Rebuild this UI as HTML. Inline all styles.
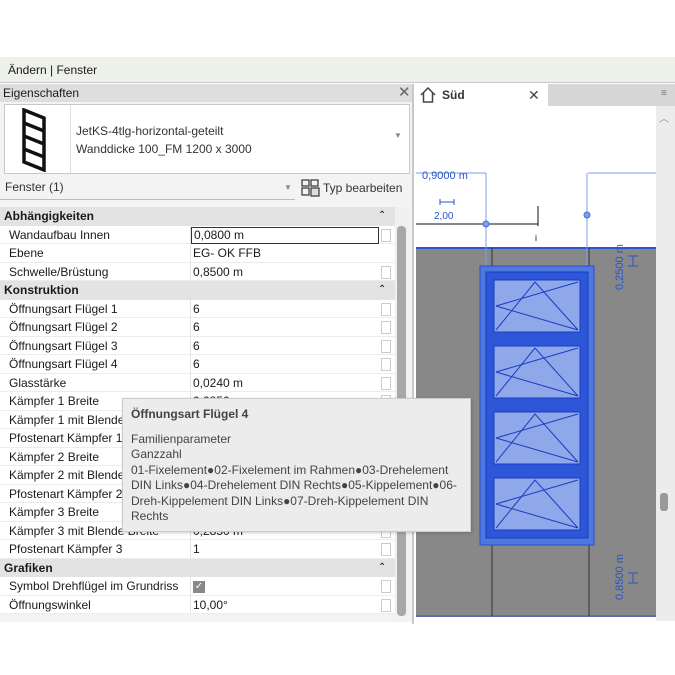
<!DOCTYPE html>
<html><head><meta charset="utf-8"><style>
*{margin:0;padding:0;box-sizing:border-box}
body{width:675px;height:675px;background:#fff;font-family:"Liberation Sans",sans-serif;font-size:12px;color:#1a1a1a;position:relative;overflow:hidden}
.abs{position:absolute}
.row{height:18.5px;line-height:18.5px;position:relative;border-bottom:1px solid #ececec;background:#fff}
.row .l{position:absolute;left:9px}
.row .v{position:absolute;left:193px}
.row .cb{position:absolute;left:381px;top:3px;width:10px;height:13px;border:1px solid #ccc;background:#fff}
.row:after{content:"";position:absolute;left:190px;top:0;bottom:0;border-left:1px solid #e4e4e4}
.sec{height:18.5px;line-height:18.5px;background:#e3e3e3;font-weight:bold;padding-left:4px;position:relative}
.sec .ch{position:absolute;left:378px;font-size:10px;font-weight:normal}
</style></head><body>
<div class="abs" style="left:0;top:57px;width:675px;height:26px;background:#eef0ea;border-bottom:1px solid #c8c8c8;line-height:26px;padding-left:8px">Ändern | Fenster</div>
<div class="abs" style="left:0;top:84px;width:412px;height:18px;background:#dedede;line-height:18px;padding-left:3px">Eigenschaften<span style="position:absolute;left:398px;top:0;font-size:15px;color:#666">✕</span></div>
<div class="abs" style="left:0;top:102px;width:412px;height:520px;background:#f3f3f3"></div>
<div class="abs" style="left:4px;top:104px;width:406px;height:70px;background:#fff;border:1px solid #c8c8c8"></div>
<div class="abs" style="left:5px;top:105px;width:66px;height:68px;border-right:1px solid #ddd"></div>
<svg class="abs" style="left:20px;top:108px" width="30" height="64"><g fill="none" stroke="#111" stroke-width="3.5"><polygon points="4,2 24,10 24,62 4,54"/><line x1="4" y1="15" x2="24" y2="23"/><line x1="4" y1="28" x2="24" y2="36"/><line x1="4" y1="41" x2="24" y2="49"/></g></svg>
<div class="abs" style="left:76px;top:122px;line-height:18px;color:#333">JetKS-4tlg-horizontal-geteilt<br>Wanddicke 100_FM 1200 x 3000</div>
<div class="abs" style="left:394px;top:131px;font-size:8px;color:#888">▼</div>
<div class="abs" style="left:5px;top:180px;color:#333">Fenster (1)</div>
<div class="abs" style="left:0;top:199px;width:295px;border-top:1px solid #bbb"></div>
<div class="abs" style="left:284px;top:183px;font-size:8px;color:#888">▼</div>
<svg class="abs" style="left:301px;top:179px" width="20" height="18"><g fill="none" stroke="#333" stroke-width="1.2"><rect x="1" y="1" width="7" height="6"/><rect x="10" y="1" width="7" height="6"/><rect x="1" y="9" width="7" height="7"/><rect x="10" y="9" width="8" height="8" fill="#ddd"/></g></svg>
<div class="abs" style="left:323px;top:181px;color:#333">Typ bearbeiten</div>
<div class="abs" style="left:0;top:207px;width:395px">
<div class="sec">Abhängigkeiten<span class="ch">⌃</span></div>
<div class="row"><span class="l">Wandaufbau Innen</span><span class="v" style="left:191px;top:1px;width:188px;height:17px;border:1px solid #333;line-height:15px;padding-left:2px">0,0800 m</span><span class="cb"></span></div>
<div class="row"><span class="l">Ebene</span><span class="v">EG- OK FFB</span></div>
<div class="row"><span class="l">Schwelle/Brüstung</span><span class="v">0,8500 m</span><span class="cb"></span></div>
<div class="sec">Konstruktion<span class="ch">⌃</span></div>
<div class="row"><span class="l">Öffnungsart Flügel 1</span><span class="v">6</span><span class="cb"></span></div>
<div class="row"><span class="l">Öffnungsart Flügel 2</span><span class="v">6</span><span class="cb"></span></div>
<div class="row"><span class="l">Öffnungsart Flügel 3</span><span class="v">6</span><span class="cb"></span></div>
<div class="row"><span class="l">Öffnungsart Flügel 4</span><span class="v">6</span><span class="cb"></span></div>
<div class="row"><span class="l">Glasstärke</span><span class="v">0,0240 m</span><span class="cb"></span></div>
<div class="row"><span class="l">Kämpfer 1 Breite</span><span class="v">0,0850 m</span><span class="cb"></span></div>
<div class="row"><span class="l">Kämpfer 1 mit Blende Breite</span><span class="v">0,2850 m</span><span class="cb"></span></div>
<div class="row"><span class="l">Pfostenart Kämpfer 1</span><span class="v">1</span><span class="cb"></span></div>
<div class="row"><span class="l">Kämpfer 2 Breite</span><span class="v">0,0850 m</span><span class="cb"></span></div>
<div class="row"><span class="l">Kämpfer 2 mit Blende Breite</span><span class="v">0,2850 m</span><span class="cb"></span></div>
<div class="row"><span class="l">Pfostenart Kämpfer 2</span><span class="v">1</span><span class="cb"></span></div>
<div class="row"><span class="l">Kämpfer 3 Breite</span><span class="v">0,0850 m</span><span class="cb"></span></div>
<div class="row"><span class="l">Kämpfer 3 mit Blende Breite</span><span class="v">0,2850 m</span><span class="cb"></span></div>
<div class="row"><span class="l">Pfostenart Kämpfer 3</span><span class="v">1</span><span class="cb"></span></div>
<div class="sec">Grafiken<span class="ch">⌃</span></div>
<div class="row"><span class="l">Symbol Drehflügel im Grundriss</span><span class="v" style="top:4px;width:12px;height:12px;background:#888;color:#fff;font-size:10px;line-height:12px;text-align:center">✓</span><span class="cb"></span></div>
<div class="row"><span class="l">Öffnungswinkel</span><span class="v">10,00°</span><span class="cb"></span></div>
</div>
<div class="abs" style="left:395px;top:207px;width:14px;height:410px;background:#f0f0f0"></div>
<div class="abs" style="left:397px;top:226px;width:9px;height:390px;background:#a8a8a8;border-radius:4px"></div>
<div class="abs" style="left:412px;top:84px;width:2px;height:540px;background:#c8c8c8"></div>
<div class="abs" style="left:414px;top:84px;width:261px;height:22px;background:#d6d6d6"></div>
<div class="abs" style="left:414px;top:84px;width:134px;height:22px;background:#fff;line-height:22px;padding-left:28px;font-weight:bold;color:#333">Süd<span style="position:absolute;left:114px;font-weight:normal;font-size:14px;color:#444">✕</span></div>
<svg class="abs" style="left:420px;top:87px" width="16" height="16"><path d="M1 8 L8 1 L15 8 M3.5 6 V15 H12.5 V6" fill="none" stroke="#444" stroke-width="1.5"/></svg>
<div class="abs" style="left:661px;top:88px;font-size:10px;color:#777">≡</div>
<div class="abs" style="left:656px;top:106px;width:19px;height:515px;background:#ececec"></div>
<div class="abs" style="left:660px;top:493px;width:8px;height:18px;background:#999;border-radius:3px"></div>
<div class="abs" style="left:659px;top:110px;font-size:10px;color:#888">︿</div>
<svg class="abs" style="left:414px;top:106px" width="242" height="515">
<rect x="2" y="142" width="240" height="369" fill="#888"/>
<line x1="2" y1="142" x2="242" y2="142" stroke="#2a55d0" stroke-width="2"/>
<line x1="2" y1="510" x2="242" y2="510" stroke="#2a55d0" stroke-width="1"/>
<line x1="78" y1="142" x2="78" y2="510" stroke="#333"/><line x1="175" y1="142" x2="175" y2="510" stroke="#333"/>
<line x1="2" y1="67" x2="72" y2="67" stroke="#7a9ff0"/><line x1="174" y1="67" x2="242" y2="67" stroke="#7a9ff0"/>
<line x1="72" y1="67" x2="72" y2="165" stroke="#7a9ff0"/><line x1="173" y1="67" x2="173" y2="165" stroke="#7a9ff0"/>
<text x="8" y="77" font-family="Liberation Sans" font-size="11" fill="#2a55c8" dy="-4">0,9000 m</text>
<line x1="2" y1="118" x2="124" y2="118" stroke="#111"/><line x1="124" y1="100" x2="124" y2="120" stroke="#111"/>
<text x="121" y="135" font-size="9" fill="#111" font-family="Liberation Sans">i</text>
<circle cx="72" cy="118" r="3" fill="#7a9ff0" stroke="#4a6fd0"/><circle cx="173" cy="109" r="3" fill="#7a9ff0" stroke="#4a6fd0"/>
<path d="M26 96 H40 M26 93 V99 M40 93 V99" stroke="#2a55c8" fill="none"/>
<text x="20" y="113" font-size="10" fill="#2a55c8" font-family="Liberation Sans">2,00</text>
<text transform="translate(209,184) rotate(-90)" font-size="11" fill="#2a55c8" font-family="Liberation Sans">0,2500 m</text>
<path d="M214 150 H224 M219 150 V160 M214 160 H224" stroke="#2a55c8" fill="none"/>
<text transform="translate(209,494) rotate(-90)" font-size="11" fill="#2a55c8" font-family="Liberation Sans">0,8500 m</text>
<path d="M214 467 H224 M219 467 V477 M214 477 H224" stroke="#2a55c8" fill="none"/>
<rect x="66" y="160" width="114" height="279" fill="#4f78de" stroke="#2850d0"/>
<rect x="72" y="166" width="102" height="266" fill="#2d56d8" stroke="#1a3cc0"/>
<g fill="#8ea8ea" stroke="#1a3cc0">
<rect x="80" y="174" width="86" height="52"/><rect x="80" y="240" width="86" height="52"/><rect x="80" y="306" width="86" height="52"/><rect x="80" y="372" width="86" height="52"/></g>
<g fill="none" stroke="#1a3cc0" stroke-width="1">
<path d="M82 224 L121 176 L164 224 M82 200 L164 224 M82 200 L164 176"/>
<path d="M82 290 L121 242 L164 290 M82 266 L164 290 M82 266 L164 242"/>
<path d="M82 356 L121 308 L164 356 M82 332 L164 356 M82 332 L164 308"/>
<path d="M82 422 L121 374 L164 422 M82 398 L164 422 M82 398 L164 374"/></g>
</svg>
<div class="abs" style="left:122px;top:398px;width:349px;height:134px;background:#ececec;border:1px solid #ccc;box-shadow:1px 1px 3px rgba(0,0,0,.2);padding:8px 8px;color:#444;line-height:15.5px">
<div style="font-weight:bold;margin-bottom:9px">Öffnungsart Flügel 4</div>
<div>Familienparameter<br>Ganzzahl<br>01-Fixelement●02-Fixelement im Rahmen●03-Drehelement DIN Links●04-Drehelement DIN Rechts●05-Kippelement●06-Dreh-Kippelement DIN Links●07-Dreh-Kippelement DIN Rechts</div>
</div>
</body></html>
